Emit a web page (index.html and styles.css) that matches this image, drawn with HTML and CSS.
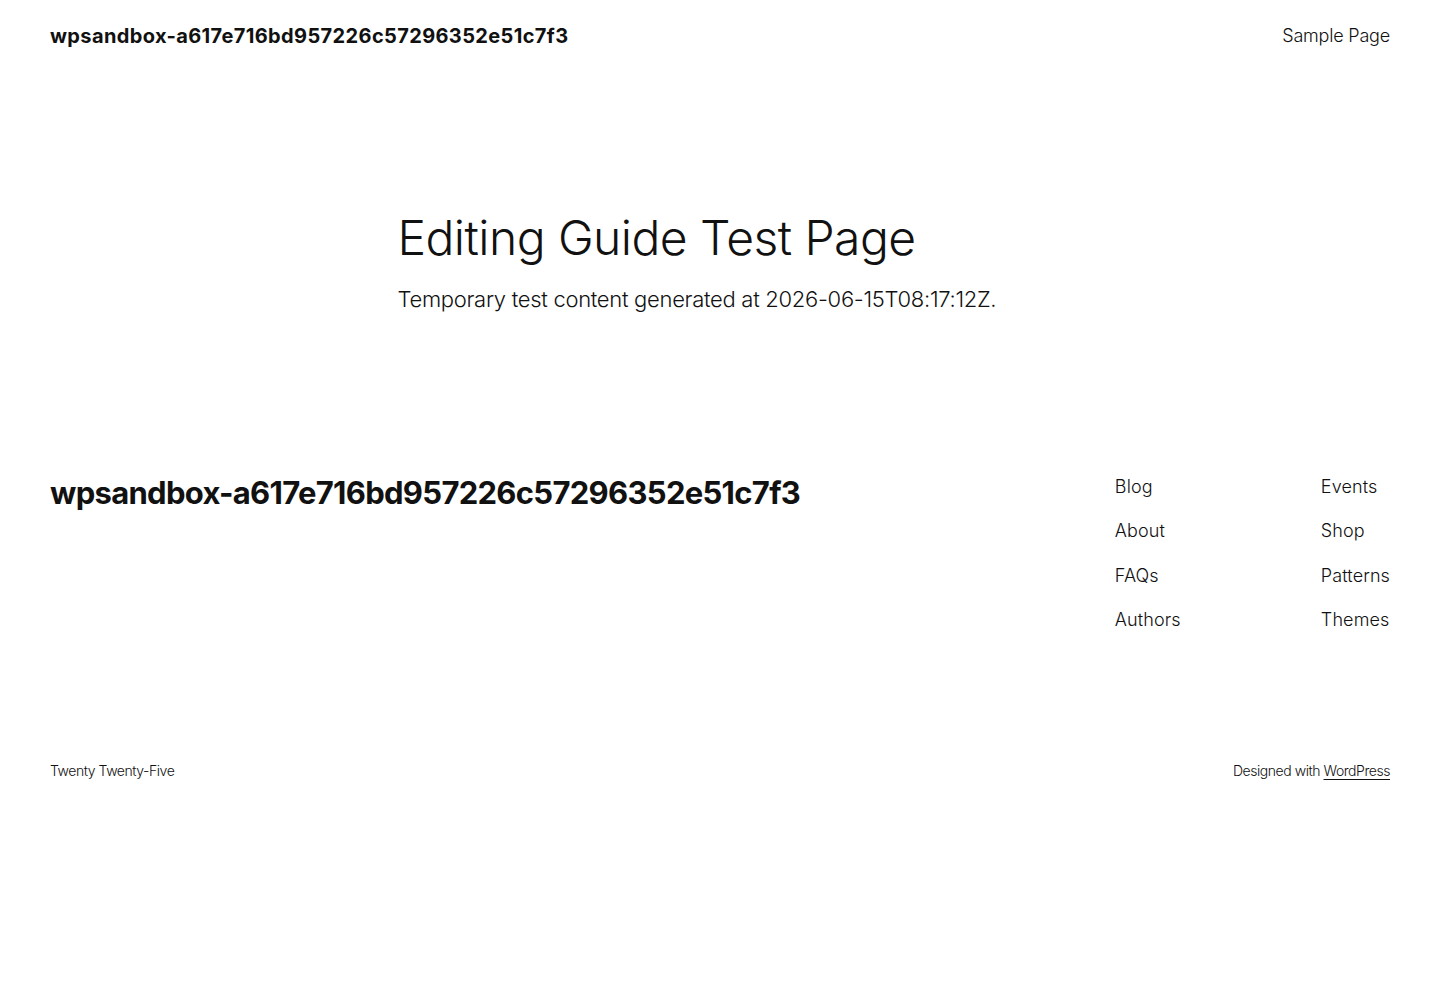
FILE: index.html
```html
<!DOCTYPE html>
<html lang="en">
<head>
<meta charset="utf-8">
<title>Editing Guide Test Page – wpsandbox</title>
<link rel="stylesheet" href="styles.css">
</head>
<body>
<header class="site-header">
  <a class="site-title" href="#">wpsandbox-a617e716bd957226c57296352e51c7f3</a>
  <nav class="header-nav"><a href="#">Sample Page</a></nav>
</header>
<main class="content">
  <h1 class="page-title">Editing Guide Test Page</h1>
  <p class="lead">Temporary test content generated at 2026-06-15T08:17:12Z.</p>
</main>
<footer class="site-footer">
  <div class="footer-top">
    <a class="footer-title" href="#">wpsandbox-a617e716bd957226c57296352e51c7f3</a>
    <div class="footer-nav">
      <ul class="nav-col">
        <li><a href="#">Blog</a></li>
        <li><a href="#">About</a></li>
        <li><a href="#">FAQs</a></li>
        <li><a href="#">Authors</a></li>
      </ul>
      <ul class="nav-col">
        <li><a href="#">Events</a></li>
        <li><a href="#">Shop</a></li>
        <li><a href="#">Patterns</a></li>
        <li><a href="#">Themes</a></li>
      </ul>
    </div>
  </div>
  <div class="footer-bottom">
    <span>Twenty Twenty-Five</span>
    <span>Designed with <a class="underline" href="#">WordPress</a></span>
  </div>
</footer>
</body>
</html>
```

FILE: styles.css
```css
* { box-sizing: border-box; }
html, body { margin: 0; padding: 0; background: #ffffff; }
body {
  font-family: Inter, "Noto Sans", sans-serif;
  font-weight: 300;
  color: #111111;
}
a { color: inherit; text-decoration: none; }

.site-header {
  height: 71px;
  padding: 0 50px;
  display: flex;
  align-items: center;
  justify-content: space-between;
}
.site-title {
  font-size: 20px;
  font-weight: 700;
  letter-spacing: 0.37px;
  line-height: 1.2;
}
.header-nav {
  font-size: 18px;
  font-weight: 300;
  letter-spacing: -0.2px;
}

.content {
  width: 645px;
  margin: 0 auto;
  padding-top: 140px;
}
.page-title {
  margin: 0 0 19px;
  font-size: 48px;
  font-weight: 300;
  line-height: 1.125;
  letter-spacing: -0.55px;
}
.lead {
  margin: 0;
  font-size: 22px;
  line-height: 1.4;
  letter-spacing: -0.3px;
}

.site-footer {
  padding: 157px 50px 0;
}
.footer-top {
  display: flex;
  justify-content: space-between;
  align-items: flex-start;
}
.footer-title {
  font-size: 31px;
  font-weight: 700;
  line-height: 1.2;
  letter-spacing: -0.7px;
  margin-top: 2px;
}
.footer-nav {
  display: flex;
  margin-top: 1px;
}
.nav-col {
  list-style: none;
  margin: 0;
  padding: 0;
  display: flex;
  flex-direction: column;
  gap: 17.5px;
  font-size: 18px;
  line-height: 27px;
  letter-spacing: 0.1px;
}
.nav-col:first-child { width: 206px; }

.footer-bottom {
  margin-top: 128px;
  display: flex;
  justify-content: space-between;
  font-size: 14px;
  line-height: 1.4;
  letter-spacing: -0.45px;
}
.underline { text-decoration: underline; text-underline-offset: 3px; }
```
